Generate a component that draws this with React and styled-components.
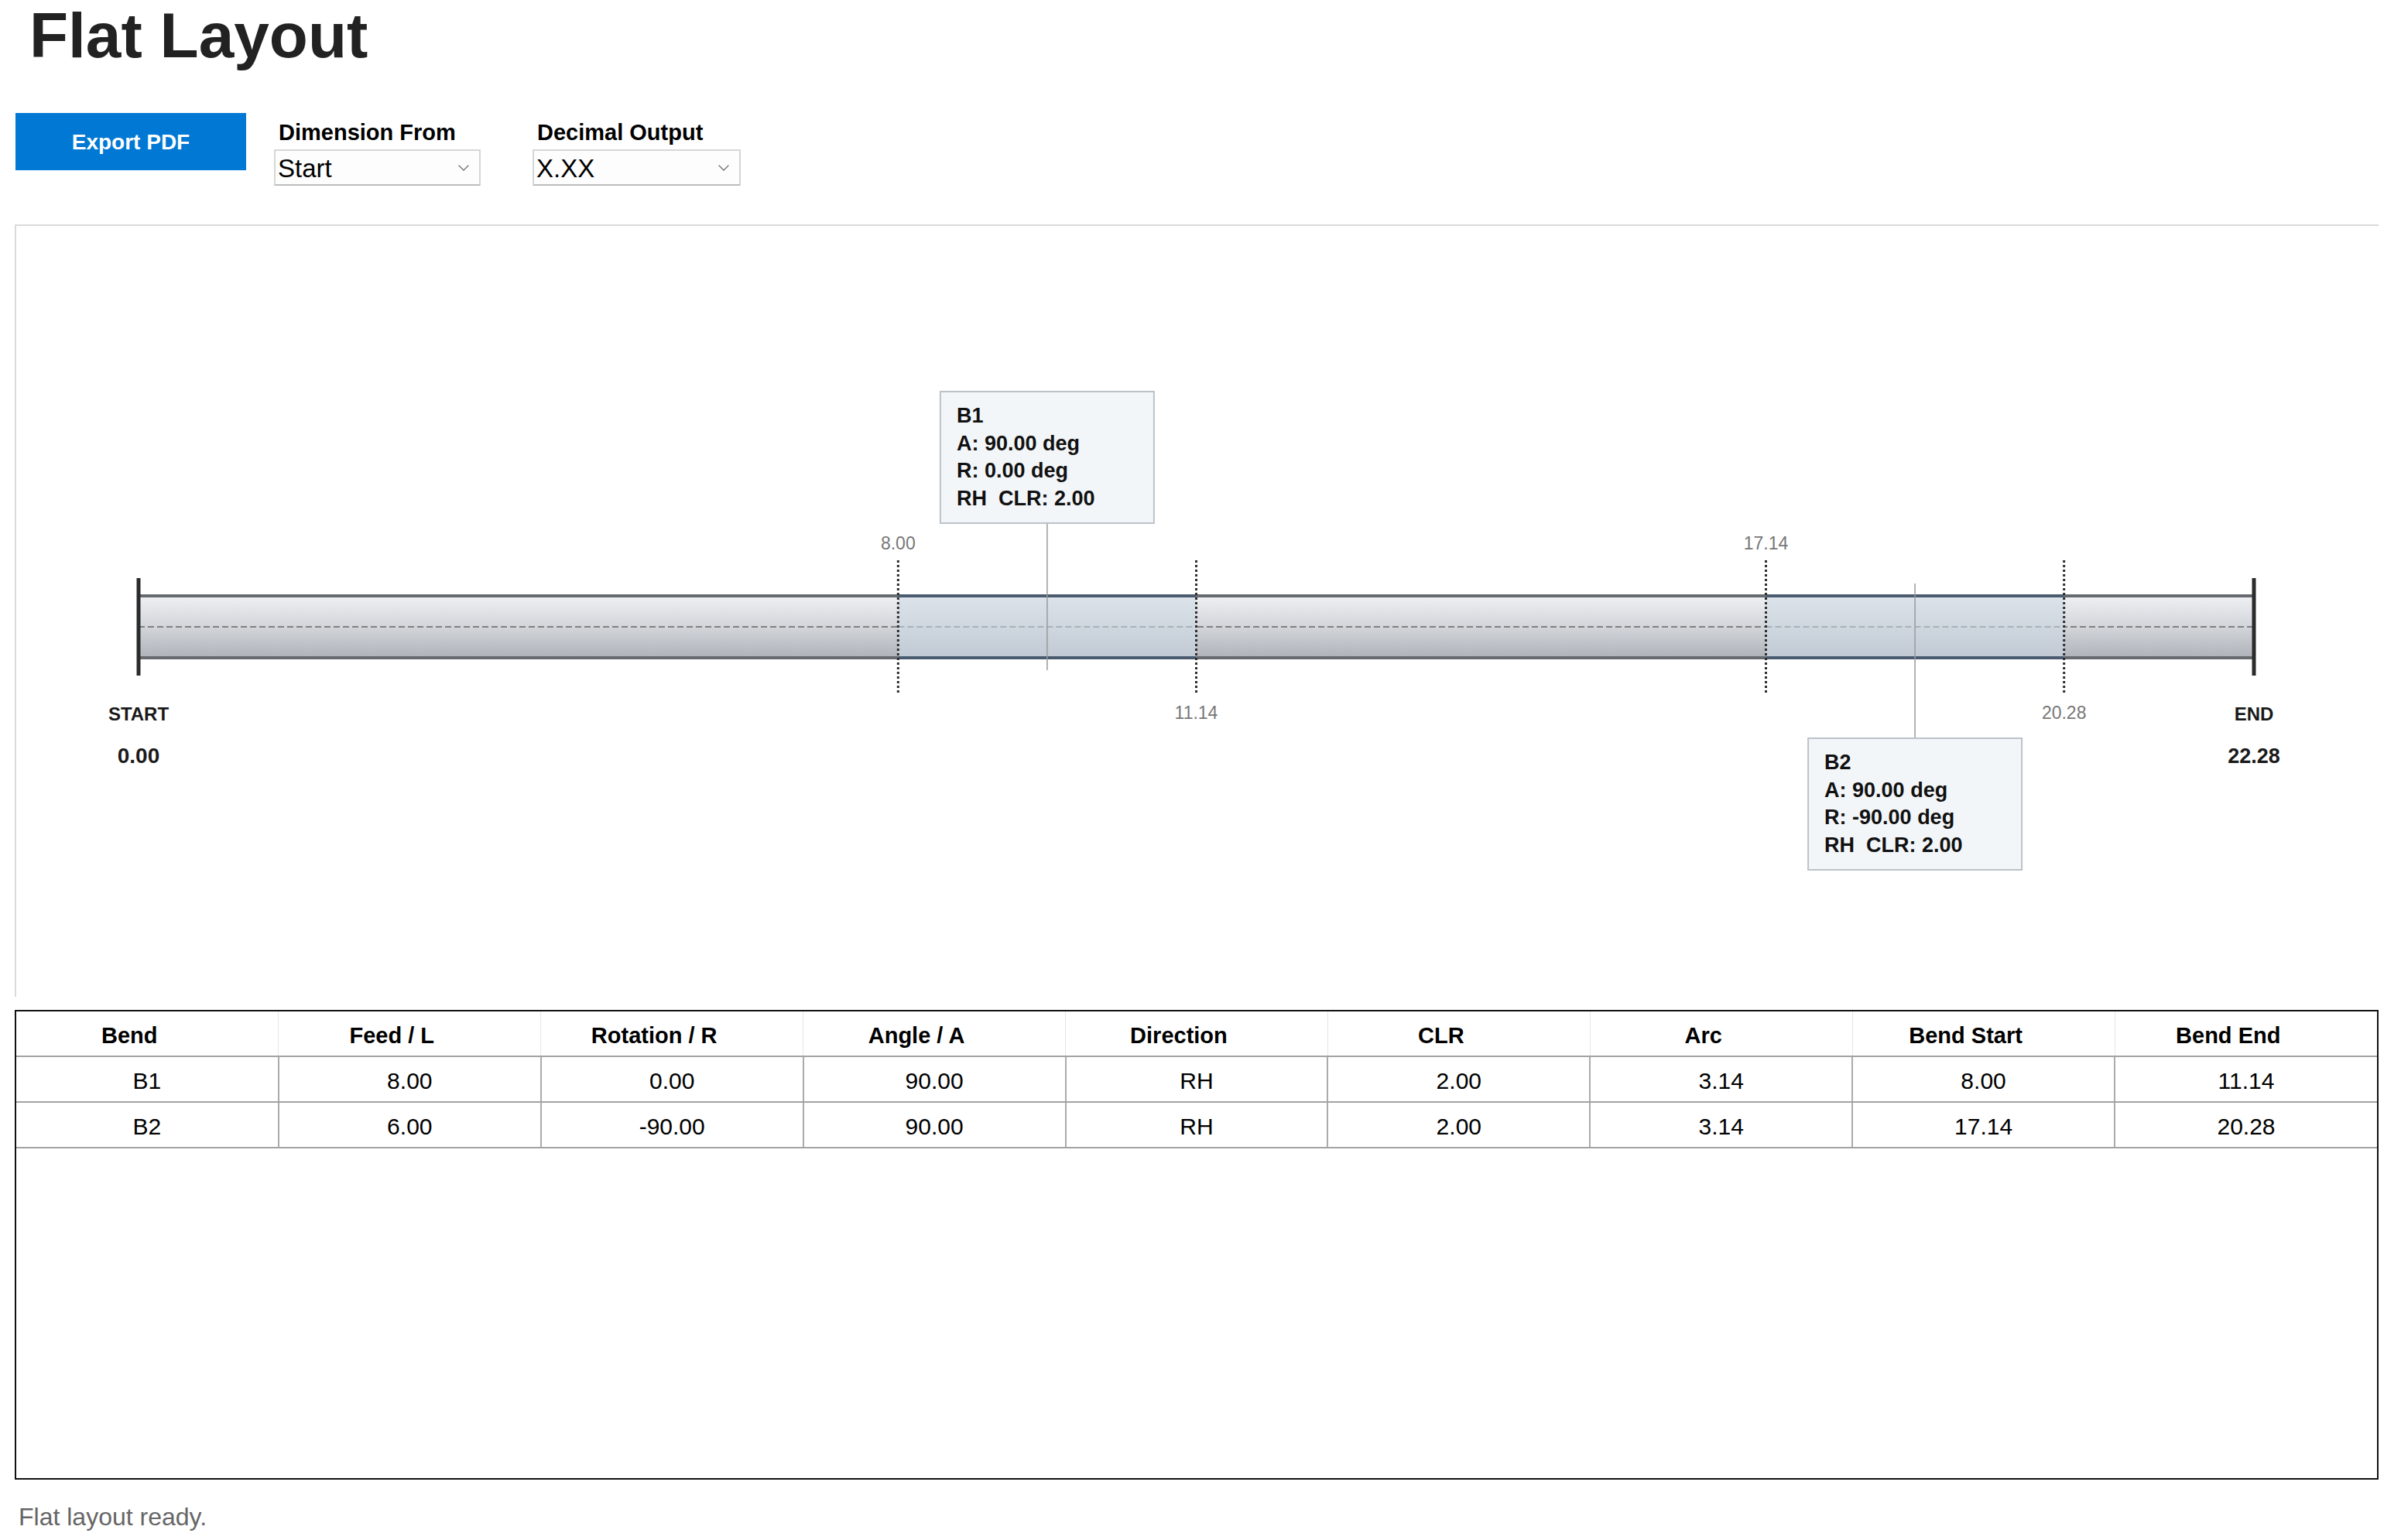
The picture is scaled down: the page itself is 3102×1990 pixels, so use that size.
import styled, { createGlobalStyle } from "styled-components";
import { ChevronDown } from "lucide-react";

const GlobalStyle = createGlobalStyle`
  html, body {
    margin: 0;
    padding: 0;
    background: #ffffff;
  }
  body {
    font-family: "Liberation Sans", Arial, sans-serif;
    color: #111;
  }
  * {
    box-sizing: border-box;
  }
`;

const Page = styled.div`
  padding: 0 29px 0 19px;
`;

const Title = styled.h1`
  margin: 0;
  padding: 5px 0 0 19px;
  font-size: 82px;
  line-height: 1;
  font-weight: 700;
  color: #222;
`;

const Toolbar = styled.div`
  display: flex;
  align-items: flex-start;
  margin-top: 59px;
  padding-left: 1px;
`;

const ExportButton = styled.button`
  width: 298px;
  height: 74px;
  padding-top: 3px;
  border: none;
  background: #0078d4;
  color: #fff;
  font-family: inherit;
  font-size: 28px;
  font-weight: 700;
  cursor: pointer;
`;

const Field = styled.div`
  display: flex;
  flex-direction: column;
  margin-left: ${p => p.$gap}px;
  padding-top: 8px;
`;

const FieldLabel = styled.label`
  padding-left: 6px;
  font-size: 29px;
  line-height: 34px;
  font-weight: 700;
  color: #000;
`;

const SelectWrap = styled.div`
  position: relative;
  margin-top: 5px;
  width: ${p => p.$width}px;
  height: 47px;
`;

const Select = styled.select`
  appearance: none;
  width: 100%;
  height: 100%;
  padding: 2px 30px 0 3px;
  border: 2px solid #d6d6d6;
  border-bottom-color: #bdbdbd;
  border-radius: 0;
  background: #fdfdfd;
  font-family: inherit;
  font-size: 33px;
  color: #000;
`;

const Chevron = styled(ChevronDown)`
  position: absolute;
  right: 10px;
  top: 50%;
  transform: translateY(-50%);
  pointer-events: none;
  color: #6a6a6a;
`;

const Canvas = styled.div`
  position: relative;
  margin-top: 50px;
  height: 998px;
  border-top: 2px solid #dadada;
  border-left: 2px solid #dadada;
  overflow: hidden;
`;

const Drawing = styled.svg`
  display: block;
  width: 100%;
  height: 100%;
  font-family: "Liberation Sans", Arial, sans-serif;
`;

const TableBox = styled.div`
  margin-top: 17px;
  height: 607px;
  border: 2px solid #111;
`;

const Table = styled.table`
  width: 100%;
  border-collapse: collapse;
  table-layout: fixed;
`;

const Th = styled.th`
  height: 58px;
  padding: 5px 46px 0 0;
  font-size: 29px;
  font-weight: 700;
  color: #000;
  text-align: center;
  border-right: 1px solid #e6e6e6;
  border-bottom: 2px solid #a3a3a3;
  &:last-child {
    border-right: none;
  }
`;

const Td = styled.td`
  height: 59px;
  padding: 5px 0 0;
  font-size: 30px;
  color: #000;
  text-align: center;
  border-right: 2px solid #ababab;
  border-bottom: 2px solid #a3a3a3;
  &:last-child {
    border-right: none;
  }
`;

const Status = styled.div`
  margin-top: 29px;
  padding-left: 5px;
  font-size: 32px;
  line-height: 38px;
  color: #666;
`;

// tube geometry in canvas space
const X0 = 158;
const X1 = 2891;
const TOTAL = 22.28;
const TOP = 478;
const BOT = 558;
const MID = 518;
const px = v => X0 + (v / TOTAL) * (X1 - X0);

const bends = [
  {
    id: "B1",
    start: 8.0,
    end: 11.14,
    lines: ["B1", "A: 90.00 deg", "R: 0.00 deg", "RH  CLR: 2.00"],
    above: true,
  },
  {
    id: "B2",
    start: 17.14,
    end: 20.28,
    lines: ["B2", "A: 90.00 deg", "R: -90.00 deg", "RH  CLR: 2.00"],
    above: false,
  },
];

const rows = [
  ["B1", "8.00", "0.00", "90.00", "RH", "2.00", "3.14", "8.00", "11.14"],
  ["B2", "6.00", "-90.00", "90.00", "RH", "2.00", "3.14", "17.14", "20.28"],
];

const headers = [
  "Bend",
  "Feed / L",
  "Rotation / R",
  "Angle / A",
  "Direction",
  "CLR",
  "Arc",
  "Bend Start",
  "Bend End",
];

function Callout({ bend }) {
  const a = px(bend.start);
  const b = px(bend.end);
  const cx = (a + b) / 2;
  const w = 276;
  const h = 170;
  const bx = cx - w / 2;
  const by = bend.above ? 214 : 662;
  const leader = bend.above ? [by + h, 574] : [462, by];
  return (
    <g>
      <line x1={cx} x2={cx} y1={leader[0]} y2={leader[1]} stroke="#9a9a9a" strokeWidth="1.5" />
      <rect x={bx} y={by} width={w} height={h} fill="#f3f6f9" stroke="#bcc2c9" strokeWidth="2" />
      {bend.lines.map((t, i) => (
        <text
          key={i}
          x={bx + 21}
          y={by + 40 + i * 35.5}
          fontSize="27"
          fontWeight="700"
          fill="#111"
          xmlSpace="preserve"
        >
          {t}
        </text>
      ))}
    </g>
  );
}

function FlatTube() {
  return (
    <Drawing>
      <defs>
        <linearGradient id="tubeFill" x1="0" y1="0" x2="0" y2="1">
          <stop offset="0" stopColor="#eef0f3" />
          <stop offset="0.5" stopColor="#d2d5da" />
          <stop offset="1" stopColor="#afb3b9" />
        </linearGradient>
        <linearGradient id="bendFill" x1="0" y1="0" x2="0" y2="1">
          <stop offset="0" stopColor="#dce3ea" />
          <stop offset="1" stopColor="#c1cad4" />
        </linearGradient>
      </defs>

      {/* straight stock */}
      <rect x={X0} y={TOP} width={X1 - X0} height={BOT - TOP} fill="url(#tubeFill)" />
      <line x1={X0} x2={X1} y1={TOP} y2={TOP} stroke="#666a6f" strokeWidth="4" />
      <line x1={X0} x2={X1} y1={BOT} y2={BOT} stroke="#666a6f" strokeWidth="4" />
      <line x1={X0} x2={X1} y1={MID} y2={MID} stroke="#808080" strokeWidth="2" strokeDasharray="8 4" />

      {/* bend zones */}
      {bends.map(b => {
        const a = px(b.start);
        const e = px(b.end);
        return (
          <g key={b.id}>
            <rect x={a} y={TOP} width={e - a} height={BOT - TOP} fill="url(#bendFill)" />
            <line x1={a} x2={e} y1={MID} y2={MID} stroke="#a8b0b8" strokeWidth="2" strokeDasharray="8 4" />
            <line x1={a} x2={e} y1={TOP} y2={TOP} stroke="#4a5b6f" strokeWidth="4" />
            <line x1={a} x2={e} y1={BOT} y2={BOT} stroke="#4a5b6f" strokeWidth="4" />
          </g>
        );
      })}

      {bends.map(b => (
        <Callout key={b.id} bend={b} />
      ))}

      {/* bend start / end markers */}
      {bends.map(b =>
        [b.start, b.end].map((v, i) => (
          <g key={`${b.id}-${i}`}>
            <line
              x1={px(v)}
              x2={px(v)}
              y1={432}
              y2={603}
              stroke="#2e2e2e"
              strokeWidth="3"
              strokeDasharray="3 3"
            />
            <text
              x={px(v)}
              y={i === 0 ? 418 : 637}
              textAnchor="middle"
              fontSize="23"
              fill="#777"
            >
              {v.toFixed(2)}
            </text>
          </g>
        ))
      )}

      {/* ends */}
      <line x1={X0} x2={X0} y1={455} y2={581} stroke="#2b2b2b" strokeWidth="5" />
      <line x1={X1} x2={X1} y1={455} y2={581} stroke="#2b2b2b" strokeWidth="5" />
      <text x={X0} y={639} textAnchor="middle" fontSize="24" fontWeight="700" fill="#1a1a1a">START</text>
      <text x={X0} y={694} textAnchor="middle" fontSize="28" fontWeight="700" fill="#1a1a1a">0.00</text>
      <text x={X1} y={639} textAnchor="middle" fontSize="24" fontWeight="700" fill="#1a1a1a">END</text>
      <text x={X1} y={694} textAnchor="middle" fontSize="27" fontWeight="700" fill="#1a1a1a">22.28</text>
    </Drawing>
  );
}

export default function App() {
  return (
    <Page>
      <GlobalStyle />
      <Title>Flat Layout</Title>
      <Toolbar>
        <ExportButton>Export PDF</ExportButton>
        <Field $gap={36}>
          <FieldLabel>Dimension From</FieldLabel>
          <SelectWrap $width={267}>
            <Select defaultValue="start">
              <option value="start">Start</option>
              <option value="end">End</option>
            </Select>
            <Chevron size={24} strokeWidth={1.2} />
          </SelectWrap>
        </Field>
        <Field $gap={67}>
          <FieldLabel>Decimal Output</FieldLabel>
          <SelectWrap $width={269}>
            <Select defaultValue="2">
              <option value="1">X.X</option>
              <option value="2">X.XX</option>
              <option value="3">X.XXX</option>
            </Select>
            <Chevron size={24} strokeWidth={1.2} />
          </SelectWrap>
        </Field>
      </Toolbar>

      <Canvas>
        <FlatTube />
      </Canvas>

      <TableBox>
        <Table>
          <thead>
            <tr>
              {headers.map(h => (
                <Th key={h}>{h}</Th>
              ))}
            </tr>
          </thead>
          <tbody>
            {rows.map(r => (
              <tr key={r[0]}>
                {r.map((c, i) => (
                  <Td key={i}>{c}</Td>
                ))}
              </tr>
            ))}
          </tbody>
        </Table>
      </TableBox>

      <Status>Flat layout ready.</Status>
    </Page>
  );
}
